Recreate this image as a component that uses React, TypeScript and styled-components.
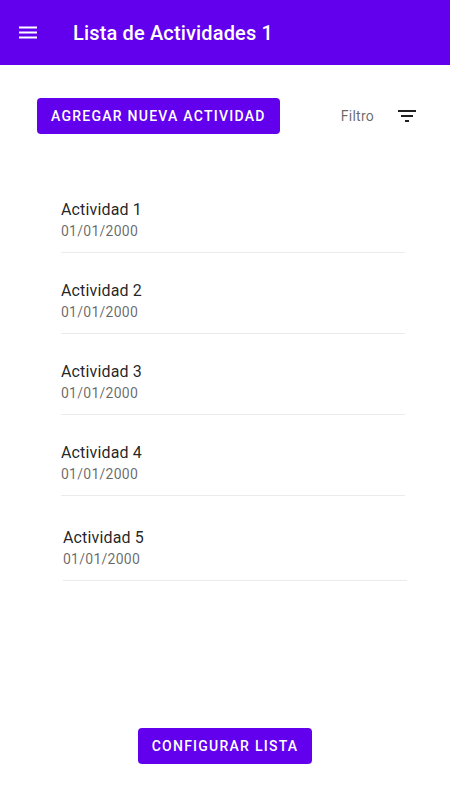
import React from "react";
import styled, { createGlobalStyle } from "styled-components";

const GlobalStyle = createGlobalStyle`
  *, *::before, *::after { box-sizing: border-box; }
  body {
    margin: 0;
    background: #ffffff;
    font-family: Roboto, "Liberation Sans", sans-serif;
  }
`;

const Screen = styled.div`
  min-height: 100vh;
  display: flex;
  flex-direction: column;
`;

const AppBar = styled.header`
  display: flex;
  align-items: center;
  gap: 33px;
  height: 65px;
  padding: 0 16px;
  background: #6200ee;
  color: #ffffff;
`;

const IconButton = styled.button`
  display: flex;
  padding: 0;
  border: 0;
  background: none;
  color: inherit;
  cursor: pointer;
`;

const Title = styled.h1`
  margin: 0;
  font-size: 20px;
  line-height: 24px;
  font-weight: 500;
  letter-spacing: 0.15px;
`;

const Main = styled.main`
  flex: 1;
  display: flex;
  flex-direction: column;
`;

const Toolbar = styled.div`
  display: flex;
  align-items: center;
  justify-content: space-between;
  padding: 33px 31px 0 37px;
`;

const Button = styled.button`
  height: 36px;
  padding: 0 14px;
  border: 0;
  border-radius: 4px;
  background: #6200ee;
  color: #ffffff;
  font-family: inherit;
  font-size: 14px;
  line-height: 16px;
  font-weight: 500;
  letter-spacing: 1.25px;
  text-transform: uppercase;
  white-space: nowrap;
  cursor: pointer;
`;

const Filter = styled.label`
  display: flex;
  align-items: center;
  gap: 21px;
  font-size: 14px;
  line-height: 20px;
  letter-spacing: 0.25px;
  color: rgba(0, 0, 0, 0.6);
`;

const FilterButton = styled(IconButton)`
  color: #1f1f1f;
`;

const List = styled.ul`
  margin: 0;
  padding: 53px 45px 0 61px;
  list-style: none;
`;

const Item = styled.li<{ $last: boolean }>`
  height: 66px;
  margin: ${(p) => (p.$last ? "19px -2px 0 2px" : "0 0 15px")};
  padding-top: 13px;
  border-bottom: 1px solid #ebebeb;
`;

const Name = styled.div`
  font-size: 16px;
  line-height: 20px;
  letter-spacing: 0.15px;
  color: rgba(0, 0, 0, 0.87);
`;

const DateText = styled.time`
  display: block;
  margin-top: 1px;
  font-size: 14px;
  line-height: 20px;
  letter-spacing: 0.25px;
  color: rgba(0, 0, 0, 0.6);
`;

const Footer = styled.footer`
  display: flex;
  justify-content: center;
  padding-bottom: 36px;
`;

const activities = [1, 2, 3, 4, 5].map((n) => ({
  name: `Actividad ${n}`,
  date: "01/01/2000",
}));

const MenuIcon = () => (
  <svg width="24" height="24" viewBox="0 0 24 24" fill="currentColor" aria-hidden="true">
    <path d="M3 17.5h18v-2H3v2zm0-5h18v-2H3v2zm0-7v2h18v-2H3z" />
  </svg>
);

const FilterIcon = () => (
  <svg width="24" height="24" viewBox="0 0 24 24" fill="currentColor" aria-hidden="true">
    <path d="M10 18h4v-2h-4v2zM3 6v2h18V6H3zm3 7h12v-2H6v2z" />
  </svg>
);

export default function App() {
  return (
    <Screen>
      <GlobalStyle />
      <AppBar>
        <IconButton type="button" aria-label="Menú">
          <MenuIcon />
        </IconButton>
        <Title>Lista de Actividades 1</Title>
      </AppBar>
      <Main>
        <Toolbar>
          <Button type="button">Agregar nueva actividad</Button>
          <Filter>
            Filtro
            <FilterButton type="button" aria-label="Filtro">
              <FilterIcon />
            </FilterButton>
          </Filter>
        </Toolbar>
        <List>
          {activities.map((a, i) => (
            <Item key={a.name} $last={i === activities.length - 1}>
              <Name>{a.name}</Name>
              <DateText dateTime="2000-01-01">{a.date}</DateText>
            </Item>
          ))}
        </List>
      </Main>
      <Footer>
        <Button type="button">Configurar lista</Button>
      </Footer>
    </Screen>
  );
}
